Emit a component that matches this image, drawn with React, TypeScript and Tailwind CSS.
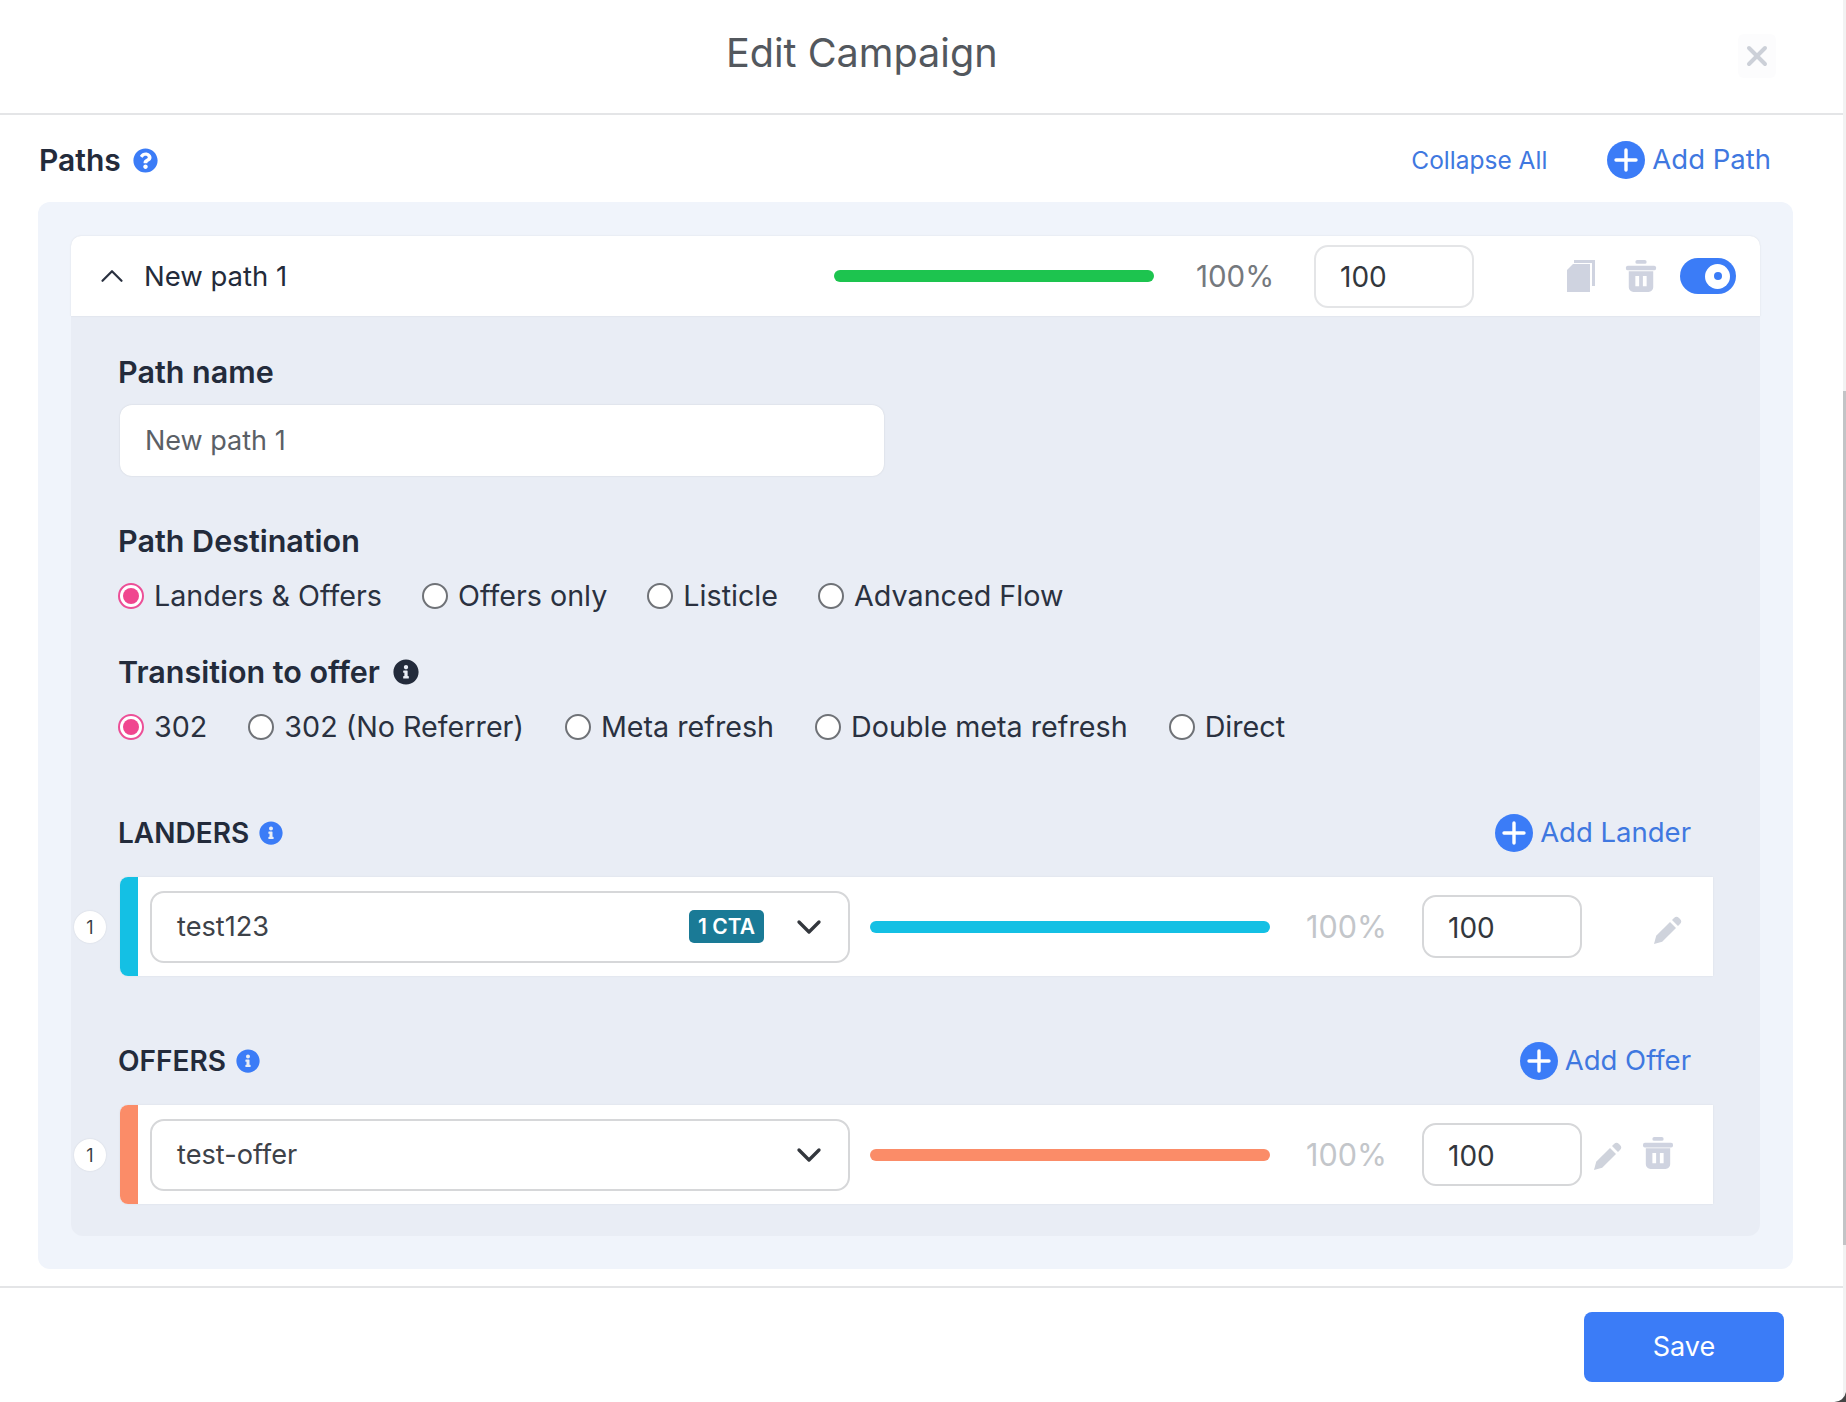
import { ChevronDown, ChevronUp, X } from 'lucide-react';
import { FaInfoCircle, FaQuestionCircle } from 'react-icons/fa';

function PlusCircle() {
  return (
    <svg viewBox="0 0 38 38" className="w-[38px] h-[38px] shrink-0">
      <circle cx="19" cy="19" r="19" fill="#3b7cf7" />
      <path d="M19 9v20M9 19h20" stroke="#fff" strokeWidth="3.4" strokeLinecap="round" />
    </svg>
  );
}

function TrashIcon({ className }: { className: string }) {
  return (
    <svg viewBox="0 0 32 34" className={className} fill="#cfd3e0">
      <rect x="10" y="0" width="12" height="4" rx="2" />
      <rect x="0" y="6" width="32" height="5" rx="2" />
      <path fillRule="evenodd" d="M3 12h26v17a5 5 0 0 1-5 5H8a5 5 0 0 1-5-5V12zm7 5v11h4V17h-4zm8 0v11h4V17h-4z" />
    </svg>
  );
}

function PencilIcon({ className }: { className: string }) {
  return (
    <svg viewBox="0 0 28 28" className={className} fill="#cfd3dc">
      <path d="M0 28l2.200-8.200L16 6l6 6L8.200 25.800z" />
      <path d="M18 4l2-2a3.500 3.500 0 0 1 5 0l1 1a3.500 3.500 0 0 1 0 5l-2 2z" />
    </svg>
  );
}

function CopyIcon() {
  return (
    <svg viewBox="0 0 28 32" className="w-[28px] h-[32px]" fill="#cfd3e0">
      <path d="M7 0h21v26h-3V3H7z" />
      <path d="M0 10l6-6h17v28H0z" />
    </svg>
  );
}

function Radio({ label, checked }: { label: string; checked?: boolean }) {
  return (
    <div className="flex items-center gap-[10px]">
      {checked ? (
        <span className="w-[26px] h-[26px] rounded-full border-2 border-[#ec4f97] bg-white flex items-center justify-center">
          <span className="w-[16px] h-[16px] rounded-full bg-[#f0468f]" />
        </span>
      ) : (
        <span className="w-[26px] h-[26px] rounded-full border-2 border-[#6f7277] bg-white" />
      )}
      <span className="pt-[1px] text-[28.7px] leading-[34px] text-[#2a3140]">{label}</span>
    </div>
  );
}

function SectionHead({ title, action }: { title: string; action: string }) {
  return (
    <div className="flex items-center justify-between h-[38px] w-[1573px]">
      <div className="flex items-center gap-[10px]">
        <span className="text-[28px] font-semibold text-[#232b3b]">{title}</span>
        <FaInfoCircle className="w-[24px] h-[24px] text-[#3b7cf7]" />
      </div>
      <div className="flex items-center gap-[7px]">
        <PlusCircle />
        <span className="text-[27.500px] text-[#3f78e0]">{action}</span>
      </div>
    </div>
  );
}

function ItemRow({
  accent,
  barColor,
  name,
  badge,
  actions,
}: {
  accent: string;
  barColor: string;
  name: string;
  badge?: string;
  actions: React.ReactNode;
}) {
  return (
    <div className="relative ml-[2px] w-[1593px] h-[99px] bg-white rounded-l-lg flex items-center shadow-[0_0_2px_rgba(0,0,0,0.08)]">
      <span className="absolute left-[-46px] top-[34px] w-[32px] h-[32px] rounded-full bg-white text-[18px] text-[#3a3f47] flex items-center justify-center shadow-[0_0_2px_rgba(0,0,0,0.1)]">
        1
      </span>
      <div className={`w-[18px] h-full rounded-l-lg ${accent}`} />
      <div className="ml-[12px] w-[700px] h-[72px] rounded-[14px] border-2 border-[#d6d7d9] flex items-center pl-[25px] pr-[19px]">
        <span className="pt-[2px] text-[27.200px] text-[#3d4249]">{name}</span>
        {badge && (
          <span className="ml-auto w-[75px] h-[33px] rounded-[5px] bg-[#1a7a96] text-white text-[21px] font-semibold flex items-center justify-center">
            {badge}
          </span>
        )}
        <ChevronDown className={`w-[40px] h-[40px] text-[#33373d] ${badge ? 'ml-[25px]' : 'ml-auto'}`} strokeWidth={2} />
      </div>
      <div className={`ml-[20px] w-[400px] h-[12px] rounded-full ${barColor}`} />
      <span className="ml-[36px] w-[116px] text-[30.500px] text-[#c3c6ca]">100%</span>
      <div className="w-[160px] h-[63px] rounded-[14px] border-2 border-[#d6d7d9] flex items-center pl-[24px] pt-[2px] text-[28px] text-[#33373d]">
        100
      </div>
      {actions}
    </div>
  );
}

export default function App() {
  return (
    <div className="relative w-[1846px] h-[1402px] bg-white flex flex-col font-['Inter',sans-serif] overflow-hidden">
      {/* Header */}
      <div className="h-[115px] shrink-0 flex items-center border-b-2 border-[#e4e5e7] pl-[726px] pr-[70px]">
        <span className="text-[39.600px] text-[#53585e] leading-none -mt-[6px]">Edit Campaign</span>
        <div className="ml-auto -mt-[2px] w-[38px] h-[44px] rounded-md bg-[#fcfcfd] flex items-center justify-center">
          <X className="w-[32px] h-[32px] text-[#ccd0d8]" strokeWidth={3} />
        </div>
      </div>

      {/* Paths heading */}
      <div className="h-[87px] shrink-0 flex items-center pl-[39px] pr-[75px] pt-[3px]">
        <span className="text-[30px] font-semibold text-[#232b3b]">Paths</span>
        <FaQuestionCircle className="ml-[12px] w-[25px] h-[25px] text-[#3b7cf7]" />
        <span className="ml-auto text-[24.500px] text-[#3f78e0]">Collapse All</span>
        <div className="ml-[60px] flex items-center gap-[7px]">
          <PlusCircle />
          <span className="text-[27.500px] text-[#3f78e0]">Add Path</span>
        </div>
      </div>

      {/* Outer panel */}
      <div className="ml-[38px] w-[1755px] h-[1067px] shrink-0 rounded-xl bg-[#f0f4fb] pt-[34px] pl-[33px]">
        <div className="w-[1689px] h-[1000px] rounded-xl bg-[#e9edf5]">
          {/* Path header */}
          <div className="h-[80px] bg-white rounded-t-[10px] flex items-center shadow-[0_0_2px_rgba(0,0,0,0.1)]">
            <ChevronUp className="ml-[22px] w-[38px] h-[38px] text-[#2a3140]" strokeWidth={1.4} />
            <span className="ml-[13px] pt-[1px] text-[27.500px] text-[#232b3b]">New path 1</span>
            <div className="ml-auto w-[320px] h-[12px] rounded-full bg-[#1dc44f]" />
            <span className="ml-[42px] w-[118px] text-[29.500px] text-[#75797e]">100%</span>
            <div className="w-[160px] h-[63px] rounded-[14px] border-2 border-[#e4e5e7] flex items-center pl-[24px] pt-[2px] text-[28px] text-[#33373d]">
              100
            </div>
            <div className="ml-[93px] flex items-center">
              <CopyIcon />
              <TrashIcon className="ml-[30px] w-[32px] h-[32px]" />
              <div className="ml-[23px] w-[56px] h-[36px] rounded-full bg-[#3b7cf7] flex items-center justify-end pr-[6px]">
                <span className="w-[25px] h-[25px] rounded-full bg-white flex items-center justify-center">
                  <span className="w-[8px] h-[8px] rounded-full bg-[#3b7cf7]" />
                </span>
              </div>
            </div>
            <div className="w-[24px]" />
          </div>

          {/* Path body */}
          <div className="pt-[39px] pl-[47px]">
            <div className="text-[30.500px] leading-[34px] font-semibold text-[#232b3b]">Path name</div>
            <div className="mt-[16px] ml-[2px] w-[764px] h-[71px] rounded-xl bg-white shadow-[0_0_2px_rgba(0,0,0,0.12)] flex items-center pl-[25px] pt-[2px] text-[27px] text-[#5b6066]">
              New path 1
            </div>

            <div className="mt-[48px] text-[30.500px] leading-[34px] font-semibold text-[#232b3b]">Path Destination</div>
            <div className="mt-[20px] flex items-center gap-[40px]">
              <Radio label="Landers & Offers" checked />
              <Radio label="Offers only" />
              <Radio label="Listicle" />
              <Radio label="Advanced Flow" />
            </div>

            <div className="mt-[42px] flex items-center gap-[13px]">
              <span className="text-[30.500px] leading-[34px] font-semibold text-[#232b3b]">Transition to offer</span>
              <FaInfoCircle className="w-[26px] h-[26px] text-[#232b3b]" />
            </div>
            <div className="mt-[20px] flex items-center gap-[41px]">
              <Radio label="302" checked />
              <Radio label="302 (No Referrer)" />
              <Radio label="Meta refresh" />
              <Radio label="Double meta refresh" />
              <Radio label="Direct" />
            </div>

            <div className="mt-[70px]">
              <SectionHead title="LANDERS" action="Add Lander" />
            </div>
            <div className="mt-[25px]">
              <ItemRow
                accent="bg-[#14c0e4]"
                barColor="bg-[#14c0e4]"
                name="test123"
                badge="1 CTA"
                actions={<PencilIcon className="ml-[72px] mt-[6px] w-[28px] h-[28px]" />}
              />
            </div>

            <div className="mt-[66px]">
              <SectionHead title="OFFERS" action="Add Offer" />
            </div>
            <div className="mt-[25px]">
              <ItemRow
                accent="bg-[#fb8c68]"
                barColor="bg-[#fb8c68]"
                name="test-offer"
                actions={
                  <>
                    <PencilIcon className="ml-[12px] mt-[2px] w-[28px] h-[28px]" />
                    <TrashIcon className="ml-[21px] -mt-[4px] w-[30px] h-[32px]" />
                  </>
                }
              />
            </div>
          </div>
        </div>
      </div>

      {/* Footer */}
      <div className="mt-[17px] mr-[2px] border-t-2 border-[#e4e5e7] pt-[24px] pr-[60px] flex justify-end">
        <button className="w-[200px] h-[70px] rounded-lg bg-[#3b7cf7] text-white text-[27px]">Save</button>
      </div>

      {/* Scrollbar strip and window corner */}
      <div className="absolute right-0 top-0 w-[3px] h-[391px] bg-[#f2f2f2]" />
      <div className="absolute right-0 top-[391px] w-[3px] h-[854px] bg-[#c2c4c6]" />
      <div className="absolute right-0 top-[1245px] w-[3px] h-[157px] bg-[#f2f2f2]" />
      <svg viewBox="0 0 12 10" className="absolute right-0 bottom-0 w-[12px] h-[10px]">
        <path d="M12 0A12 12 0 0 1 0 10H12z" fill="#444" />
      </svg>
    </div>
  );
}
